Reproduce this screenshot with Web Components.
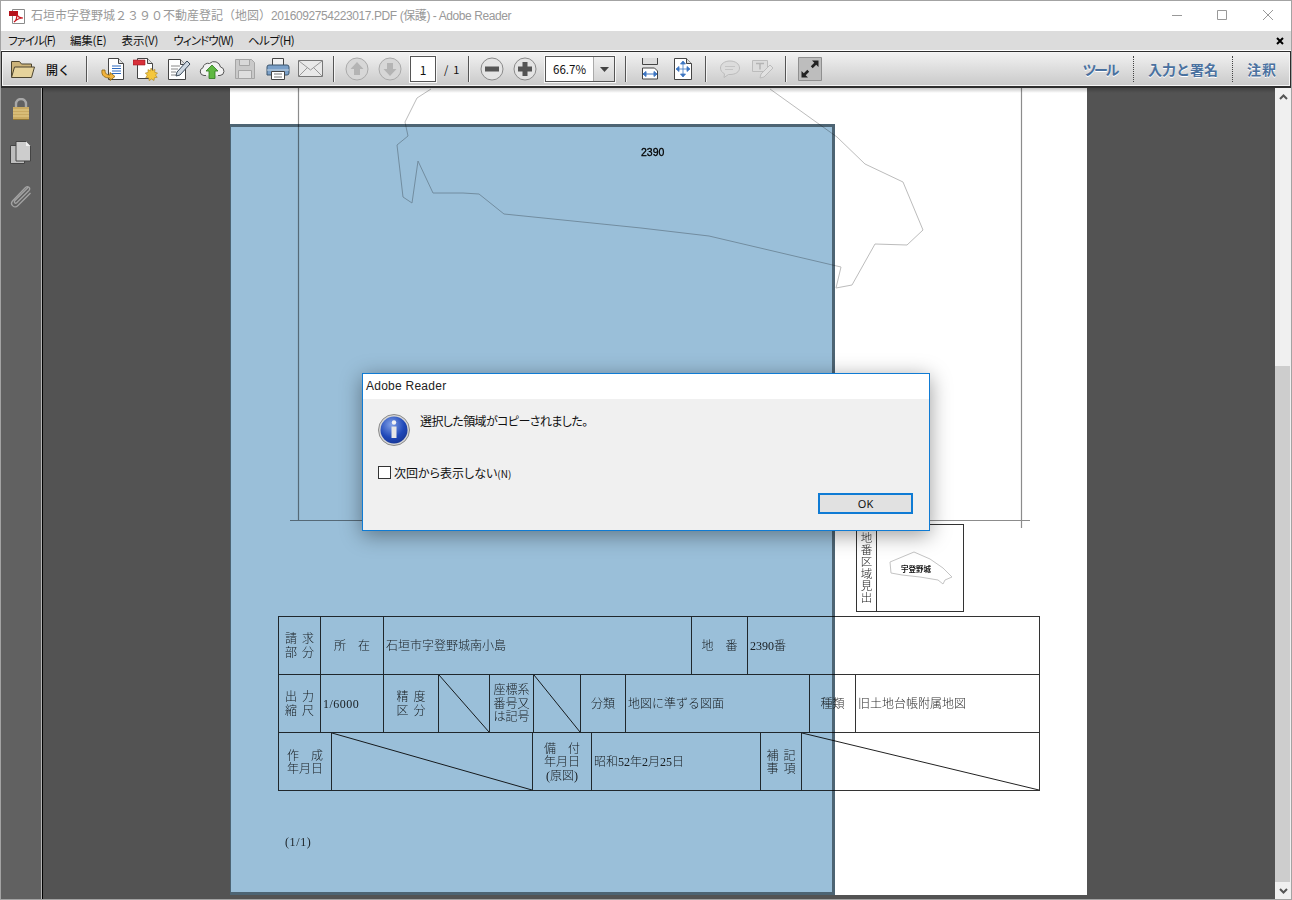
<!DOCTYPE html>
<html lang="ja">
<head>
<meta charset="utf-8">
<title>Adobe Reader</title>
<style>
  html, body { margin: 0; padding: 0; background: #535353; }
  body { font-family: "Noto Sans CJK JP", "Noto Sans", sans-serif; overflow: hidden; }
</style>
</head>
<body>
<reader-window>
  <title-bar>石垣市字登野城２３９０不動産登記（地図）<span style="letter-spacing:-.42px">2016092754223017.PDF (保護) - Adobe Reader</span></title-bar>
  <menu-bar></menu-bar>
  <tool-bar></tool-bar>
  <nav-pane></nav-pane>
  <doc-viewer></doc-viewer>
  <scroll-bar></scroll-bar>
  <message-dialog heading="Adobe Reader" message="選択した領域がコピーされました。"></message-dialog>
</reader-window>

<script>
const UI_FONT = `"Noto Sans CJK JP", "Noto Sans", sans-serif`;
const DOC_FONT = `"Liberation Serif", "Noto Sans CJK JP", serif`;

class ReaderWindow extends HTMLElement {
  constructor() {
    super();
    this.attachShadow({ mode: "open" });
  }
  connectedCallback() {
    this.shadowRoot.innerHTML = `
      <style>
        :host {
          display: flex;
          flex-direction: column;
          position: relative;
          width: 1292px;
          height: 900px;
          box-sizing: border-box;
          border: 1px solid #a3a3a3;
          background: #fff;
          overflow: hidden;
        }
        .main { display: flex; flex: 1; min-height: 0; }
      </style>
      <slot name="top"></slot>
      <div class="main"><slot name="main"></slot></div>
      <slot name="over"></slot>
    `;
    for (const el of this.children) {
      const tag = el.tagName.toLowerCase();
      if (tag === "nav-pane" || tag === "doc-viewer" || tag === "scroll-bar") el.slot = "main";
      else if (tag === "message-dialog") el.slot = "over";
      else el.slot = "top";
    }
  }
}

class TitleBar extends HTMLElement {
  constructor() {
    super();
    this.attachShadow({ mode: "open" });
  }
  connectedCallback() {
    this.shadowRoot.innerHTML = `
      <style>
        :host {
          display: flex;
          align-items: center;
          height: 30px;
          background: #fff;
          color: #999;
          font: 12px/30px "Liberation Sans", ${UI_FONT};
          white-space: nowrap;
        }
        .icon { margin: 0 5px 0 8px; flex: none; }
        .text { flex: 1; }
        .ctl { width: 46px; height: 30px; box-sizing: border-box; padding-bottom: 2px; display: flex; align-items: center; justify-content: center; flex: none; }
      </style>
      <svg class="icon" width="17" height="17" viewBox="0 0 17 17">
        <path d="M3.500 1.500h12v14h-12z" fill="#fff" stroke="#8a8a8a"/>
        <path d="M0 3h9v5H0z" fill="#b5121b"/>
        <path d="M5 14c2-1 3-5 3-9 0 4 3 5 6 5-3 0-6 1-9 4z" fill="none" stroke="#c8161f" stroke-width="1.200"/>
      </svg>
      <span class="text"><slot></slot></span>
      <span class="ctl" style="width:44px"><svg width="10" height="10"><path d="M0 5.500h10" stroke="#999"/></svg></span>
      <span class="ctl"><svg width="10" height="10"><path d="M.5.500h9v9h-9z" fill="none" stroke="#999"/></svg></span>
      <span class="ctl"><svg width="10" height="10"><path d="M0 0l10 10M10 0L0 10" stroke="#999"/></svg></span>
    `;
  }
}

class MenuBar extends HTMLElement {
  constructor() {
    super();
    this.attachShadow({ mode: "open" });
  }
  connectedCallback() {
    this.shadowRoot.innerHTML = `
      <style>
        :host {
          display: flex;
          align-items: center;
          height: 19px;
          margin-bottom: 1px;
          padding-left: 7px;
          background: #dcdcdc;
          color: #111;
          font: 11.500px/19px ${UI_FONT};
          font-feature-settings: "palt";
          white-space: nowrap;
        }
        span { margin-right: 15px; }
        svg { margin-left: auto; margin-right: 7px; }
      </style>
      <span style="letter-spacing:-1px">ファイル(F)</span><span style="letter-spacing:-.2px">編集(E)</span><span style="letter-spacing:-.1px">表示(V)</span><span style="letter-spacing:-.9px">ウィンドウ(W)</span><span style="letter-spacing:-.5px">ヘルプ(H)</span>
      <svg width="8" height="8"><path d="M1 1l6 6M7 1L1 7" stroke="#000" stroke-width="2"/></svg>
    `;
  }
}

const ICONS = {
  folder: `<svg width="26" height="22" viewBox="0 0 26 22"><path d="M1.500 19V3.500h8l2 2.500h10V9" fill="#cdb47a" stroke="#4d4530"/><path d="M1.500 19.500l3-10.500h20l-3 10.500z" fill="#e6d39c" stroke="#4d4530"/></svg>`,
  exportDoc: `<svg width="26" height="26" viewBox="0 0 26 26"><path d="M8.500 2.500h10l5 5v16h-15z" fill="#fff" stroke="#444"/><path d="M18.500 2.500v5h5" fill="#ddd" stroke="#444"/><path d="M12 10h9M12 12.500h9M12 15h9M12 17.500h9" stroke="#2f6bc0"/><path d="M2 14c-1 6 3 8 8 8v2.500l5-4-5-4V19c-3 0-5-1-5-5z" fill="#f2b33d" stroke="#8c6410" stroke-width=".8"/></svg>`,
  pageGear: `<svg width="26" height="26" viewBox="0 0 26 26"><path d="M4.500 2.500h10l5 5v15h-15z" fill="#fff" stroke="#444"/><path d="M14.500 2.500v5h5" fill="#ddd" stroke="#444"/><path d="M0 4h12v5H0z" fill="#d8303a" stroke="#9c1a22" stroke-width=".6"/><path d="M18 12l1.500 2.500 2.500-1-.3 2.800 2.800.7-2 2 1.700 2.300-2.800.4-.4 2.800-2.500-1.500-2.300 1.700-.6-2.800-2.800-.3 1.500-2.500-2-2 2.800-.7-.1-2.800 2.500 1.200z" fill="#f5c73c" stroke="#a9801a" stroke-width=".6"/></svg>`,
  pagePen: `<svg width="24" height="24" viewBox="0 0 24 24"><path d="M1.500 2.500h12l5 5v15h-17z" fill="#fff" stroke="#444"/><path d="M13.500 2.500v5h5" fill="#ddd" stroke="#444"/><path d="M4 9h9M4 12h7M4 15h5M4 18h5" stroke="#888"/><path d="M9 19l1-4L20 4l3 3-10 11z" fill="#cfd8e2" stroke="#3a4a5a"/></svg>`,
  cloud: `<svg width="26" height="24" viewBox="0 0 26 24"><path d="M7 18.500H5a4 4 0 0 1-1-7.800 5 5 0 0 1 6.500-4.200 6.500 6.500 0 0 1 11 3.500 4.300 4.300 0 0 1-.5 8.500h-2" fill="#f2f2f2" stroke="#555"/><path d="M13 8l6 6h-3v7.500h-6V14H7z" fill="#5fb842" stroke="#2f7a1f" stroke-width=".8"/></svg>`,
  save: `<svg width="22" height="22" viewBox="0 0 22 22"><path d="M1.500 1.500h16l3 3v16h-19z" fill="#c9c9c9" stroke="#a5a5a5"/><path d="M5.500 1.500h10v6h-10z" fill="#d8d8d8" stroke="#a5a5a5"/><path d="M4.500 12.500h13v8h-13z" fill="#dedede" stroke="#a5a5a5"/></svg>`,
  print: `<svg width="24" height="24" viewBox="0 0 24 24"><path d="M6.500 1.500h11v7h-11z" fill="#f2f2f2" stroke="#444"/><path d="M3 8h18q2 0 2 2v6q0 2-2 2H1v-8q0-2 2-2z" fill="#7ba0c8" stroke="#3d566f"/><path d="M1 13h22" stroke="#c7d5e2"/><path d="M5.500 14.500h13v8h-13z" fill="#fff" stroke="#444"/><path d="M8 17h8M8 20h8" stroke="#777"/></svg>`,
  mail: `<svg width="25" height="18" viewBox="0 0 25 18"><path d="M.5.500h24v16h-24z" fill="#e9e9e9" stroke="#777"/><path d="M1 1l11.500 9L24 1M1 16l8.500-8.500M24 16l-8.500-8.500" fill="none" stroke="#999"/></svg>`,
  up: `<svg width="24" height="24" viewBox="0 0 24 24"><circle cx="12" cy="12" r="11" fill="#d7d7d7" stroke="#aaa"/><path d="M12 5l6.500 7H15v6H9v-6H5.500z" fill="#b4b4b4"/></svg>`,
  down: `<svg width="24" height="24" viewBox="0 0 24 24"><circle cx="12" cy="12" r="11" fill="#d7d7d7" stroke="#aaa"/><path d="M12 19l6.500-7H15V6H9v6H5.500z" fill="#b4b4b4"/></svg>`,
  minus: `<svg width="24" height="24" viewBox="0 0 24 24"><circle cx="12" cy="12" r="11" fill="#e4e4e4" stroke="#8a8a8a"/><path d="M5 9.500h14v5H5z" fill="#555"/></svg>`,
  plus: `<svg width="24" height="24" viewBox="0 0 24 24"><circle cx="12" cy="12" r="11" fill="#e4e4e4" stroke="#8a8a8a"/><path d="M9.500 5h5v4.500H19v5h-4.500V19h-5v-4.500H5v-5h4.500z" fill="#555"/></svg>`,
  fitWidth: `<svg width="18" height="22" viewBox="0 0 18 22"><path d="M1.500 0v6.500h15V0" fill="#dcdcdc" stroke="#444"/><path d="M1.500 21v-11h12l3 3v8z" fill="#fff" stroke="#444"/><path d="M2 16h14M2 16l3-2.500V18.500zM16 16l-3-2.500v5z" fill="#3e76c2" stroke="#3e76c2"/></svg>`,
  fitPage: `<svg width="18" height="22" viewBox="0 0 18 22"><path d="M.5.500h12l5 5v16H.5z" fill="#fff" stroke="#444"/><path d="M12.500.500v5h5" fill="#ddd" stroke="#444"/><path d="M9 4v14M3 11h12M9 3l-2.500 3h5zM9 19l-2.500-3h5zM2 11l3-2.500v5zM16 11l-3-2.500v5z" fill="#3e76c2" stroke="#3e76c2" stroke-width=".8"/></svg>`,
  comment: `<svg width="22" height="20" viewBox="0 0 22 20"><path d="M11 2C5.500 2 1.500 5 1.500 9c0 2.500 1.500 4.500 4 5.800L5 18.500l4.500-3H11c5.500 0 9.500-2.500 9.500-6.500S16.500 2 11 2z" fill="#dcdcdc" stroke="#bcbcbc"/><path d="M6 7.500h10M6 10.500h8" stroke="#c4c4c4"/></svg>`,
  textPen: `<svg width="22" height="22" viewBox="0 0 22 22"><path d="M.5 2.500h15v11H.5z" fill="#dcdcdc" stroke="#bcbcbc"/><path d="M4 5.500h8M8 5.500v6" stroke="#b4b4b4" stroke-width="1.500"/><path d="M8 20l1-4 9-9 3 3-9 9z" fill="#e2e2e2" stroke="#bcbcbc"/></svg>`,
  expand: `<svg width="24" height="24" viewBox="0 0 24 24"><path d="M.5.500h23v23H.5z" fill="#bdbdbd" stroke="#8f8f8f"/><path d="M14 3.500h6.500V10l-2.300-2.300-3.500 3.500-1.900-1.900 3.500-3.500z" fill="#222"/><path d="M3.500 20.500V14l2.300 2.300 3.500-3.500 1.900 1.900-3.500 3.500 2.300 2.300z" fill="#222"/></svg>`,
  caret: `<svg width="9" height="5"><path d="M0 0h9L4.500 5z" fill="#444"/></svg>`
};

class ToolBar extends HTMLElement {
  constructor() {
    super();
    this.attachShadow({ mode: "open" });
  }
  connectedCallback() {
    const btn = (name, ml) => `<span class="btn" style="margin-left:${ml || 0}px">${ICONS[name]}</span>`;
    const sep = (ml) => `<span class="sep" style="margin-left:${ml}px"></span>`;
    this.shadowRoot.innerHTML = `
      <style>
        :host {
          display: flex;
          align-items: center;
          height: 37px;
          box-sizing: border-box;
          border: 1px solid #2d2d2d;
          border-width: 1px 1px 2px 1px;
          box-shadow: inset 0 0 0 1px #f4f4f4;
          background: linear-gradient(#f2f2f2, #c9c9c9);
          color: #111;
          font: 12px ${UI_FONT};
          white-space: nowrap;
        }
        .btn { display: flex; align-items: center; justify-content: center; width: 33px; height: 32px; flex: none; }
        .folder { width: 34px; margin-left: 4px; }
        .open { width: 22px; margin-left: 6px; font-size: 12px; font-weight: 500; }
        .sep { width: 2px; height: 26px; flex: none; background: linear-gradient(90deg, #555 50%, #f4f4f4 50%); }
        .box {
          display: flex;
          align-items: center;
          justify-content: center;
          box-sizing: border-box;
          height: 26px;
          border: 1px solid #555;
          box-shadow: 0 0 0 1px #f8f8f8;
          background: #fff;
          flex: none;
        }
        .page { width: 26px; margin-left: 4px; }
        .count { width: 16px; margin-left: 8px; font-size: 11px; }
        .zoom { width: 70px; margin-left: 4px; justify-content: flex-start; }
        .zoom b { font-weight: 400; width: 47px; text-align: center; font-size: 11.500px; }
        .zoom i { display: flex; align-items: center; justify-content: center; align-self: stretch; flex: 1; border-left: 1px solid #aaa; background: linear-gradient(#f0f0f0, #d4d4d4); }
        .right { margin-left: auto; margin-right: 13px; display: flex; align-items: center; color: #4a719f; font-size: 14px; font-weight: 700; text-shadow: 0 1px 0 #fff; }
        .right span + span { margin-left: 14px; padding-left: 14px; border-left: 1px dotted #444; line-height: 26px; }
        .right span:nth-child(2) { margin-left: 16px; }
      </style>
      <span class="btn folder">${ICONS.folder}</span>
      <span class="open">開く</span>
      ${sep(18)}
      ${btn("exportDoc", 8)}${btn("pageGear")}${btn("pagePen")}${btn("cloud")}${btn("save")}${btn("print")}${btn("mail")}
      ${sep(6)}
      ${btn("up", 5)}${btn("down")}
      <span class="box page">1</span>
      <span class="count">/&nbsp;&nbsp;1</span>
      ${sep(8)}
      ${btn("minus", 5)}${btn("plus")}
      <span class="box zoom"><b>66.7%</b><i>${ICONS.caret}</i></span>
      ${sep(10)}
      ${btn("fitWidth", 6)}${btn("fitPage")}
      ${sep(6)}
      ${btn("comment", 6)}${btn("textPen")}
      ${sep(6)}
      ${btn("expand", 6)}
      <div class="right"><span style="letter-spacing:-2.500px">ツール</span><span>入力と署名</span><span style="letter-spacing:1px">注釈</span></div>
    `;
  }
}

class NavPane extends HTMLElement {
  constructor() {
    super();
    this.attachShadow({ mode: "open" });
  }
  connectedCallback() {
    this.shadowRoot.innerHTML = `
      <style>
        :host {
          display: flex;
          flex-direction: column;
          align-items: center;
          flex: none;
          width: 42px;
          box-sizing: border-box;
          padding: 10px 2px 0 0;
          gap: 20px;
          background: #616161;
          border-right: 1px solid #000;
          box-shadow: inset -1px 0 0 #b5b5b5;
        }
        svg { display: block; }
      </style>
      <svg width="18" height="23" viewBox="0 0 18 23"><path d="M4 10V6a5 5 0 0 1 10 0v4" fill="none" stroke="#a8a8a8" stroke-width="2.400"/><path d="M1 9h16v13H1z" fill="#c9aa62"/><path d="M1 12h16M1 15h16M1 18h16" stroke="#e6cf8c"/><path d="M1 21.500h16" stroke="#8f7636"/></svg>
      <svg width="21" height="23" viewBox="0 0 21 23"><path d="M.5 4.500h14v18H.5z" fill="#bdbdbd" stroke="#444"/><path d="M6 .500h10l4.500 4.500v15H6z" fill="#cdcdcd" stroke="#444"/><path d="M16 .500v4.500h4.500z" fill="#f0f0f0"/></svg>
      <svg width="22" height="24" viewBox="0 0 22 24"><path d="M18 3.500L5 16.500c-1.500 1.500 0 3.500 1.500 2.500L19 6.500c2-2.500-1-5-3.500-3L2.500 17c-3 3.500 2 8 5.500 4.500L20.500 9" fill="none" stroke="#a3a3a3" stroke-width="1.300"/></svg>
    `;
  }
}

class DocViewer extends HTMLElement {
  constructor() {
    super();
    this.attachShadow({ mode: "open" });
  }
  connectedCallback() {
    this.shadowRoot.innerHTML = `
      <style>
        :host {
          display: flex;
          justify-content: center;
          align-items: flex-start;
          position: relative;
          flex: 1;
          min-width: 0;
          background: #535353;
          overflow: hidden;
        }
        pdf-page { margin-right: 1px; }
        .shade { position: absolute; left: 0; right: 0; top: 0; height: 5px; background: linear-gradient(rgba(0,0,0,.22), rgba(0,0,0,0)); z-index: 2; }
      </style>
      <div class="shade"></div>
      <pdf-page></pdf-page>
    `;
  }
}

class PdfPage extends HTMLElement {
  constructor() {
    super();
    this.attachShadow({ mode: "open" });
  }
  connectedCallback() {
    this.shadowRoot.innerHTML = `
      <style>
        :host {
          display: block;
          position: relative;
          isolation: isolate;
          flex: none;
          width: 857px;
          height: 807px;
          background: #fff;
          color: #222;
          font-family: ${DOC_FONT};
          font-weight: 300;
        }
        svg.map { position: absolute; left: 0; top: 0; }
        .parcel { position: absolute; left: 411px; top: 58px; font: 10.500px "Liberation Sans", sans-serif; color: #000; -webkit-text-stroke: .3px #000; }
        .sheet { position: absolute; left: 55px; top: 747px; font-size: 12px; letter-spacing: .6px; color: #333; }
        .legend {
          position: absolute;
          left: 626px;
          top: 436px;
          width: 108px;
          height: 88px;
          box-sizing: border-box;
          display: flex;
          border: 1px solid #333;
        }
        .legend .head {
          width: 20px;
          box-sizing: border-box;
          border-right: 1px solid #333;
          display: flex;
          align-items: flex-end;
          justify-content: center;
          padding-bottom: 7px;
          font-size: 11.500px;
          line-height: 12px;
          text-align: center;
        }
        .legend .town { position: absolute; left: 44px; top: 38px; font: 700 7.500px "Noto Sans CJK JP", sans-serif; white-space: nowrap; color: #111; }
        parcel-table { position: absolute; left: 48px; top: 528px; }
        .selection {
          position: absolute;
          left: 0;
          top: 36px;
          width: 605px;
          height: 771px;
          box-sizing: border-box;
          border: solid #4d6473;
          border-width: 3px 3px 3px 1px;
          background: #9abfd9;
          mix-blend-mode: multiply;
        }
      </style>
      <svg class="map" width="857" height="807" viewBox="230 88 857 807">
        <path d="M298.500 88v432M1021.500 88v440M290 520.500h740" fill="none" stroke="#8c8c8c" stroke-width="1.200"/>
        <path d="M431 89l-14 9-12 24 3 14-11 9 6 52 9 6 6-42 15 32h30l16 1 25 20 137 14 68 8 132 31-5 21 16-3 23-41 32 1 16-15-20-48-38-18-28-27-67-48" fill="none" stroke="#bcbcbc"/>
        <path d="M890 562l12-5 12-5 16 7 13 9 9 9-7 3-2 4-5-4-18-3-18-2-11-2z" fill="none" stroke="#c4c4c4"/>
      </svg>
      <span class="parcel">2390</span>
      <span class="sheet">(1/1)</span>
      <div class="legend">
        <div class="head">地<br>番<br>区<br>域<br>見<br>出</div>
        <span class="town">宇登野城</span>
      </div>
      <parcel-table></parcel-table>
      <div class="selection"></div>
    `;
  }
}

class ParcelTable extends HTMLElement {
  constructor() {
    super();
    this.attachShadow({ mode: "open" });
  }
  connectedCallback() {
    const cell = (w, html, cls) => `<div class="cell ${cls || ""}" style="width:${w}px">${html || ""}</div>`;
    const diag = `<svg class="diag" preserveAspectRatio="none" viewBox="0 0 100 100"><path d="M0 0L100 100" stroke="#222" vector-effect="non-scaling-stroke" fill="none"/></svg>`;
    this.shadowRoot.innerHTML = `
      <style>
        :host {
          display: block;
          width: 762px;
          box-sizing: border-box;
          border: 1px solid #333;
          border-bottom: 0;
          font-size: 12px;
          color: #2a2a2a;
        }
        .row { display: flex; height: 57px; border-bottom: 1px solid #333; }
        .row:first-child { height: 58px; }
        .cell {
          position: relative;
          display: flex;
          align-items: center;
          justify-content: center;
          text-align: center;
          box-sizing: border-box;
          flex: none;
          padding-top: 2px;
          border-right: 1px solid #333;
          line-height: 13.500px;
          white-space: pre;
          word-spacing: 2px;
        }
        .row:last-child .cell { padding-top: 3px; }
        .cell:last-child { border-right: 0; flex: 1; }
        .l { justify-content: flex-start; text-align: left; padding-left: 2px; }
        .wide { letter-spacing: .5px; }
        .diag { position: absolute; left: 0; top: 0; width: 100%; height: 100%; }
      </style>
      <div class="row">
        ${cell(42, "請 求\n部 分")}
        ${cell(63, "所　在")}
        ${cell(308, "石垣市字登野城南小島", "l")}
        ${cell(56, "地　番")}
        ${cell(0, "2390番", "l")}
      </div>
      <div class="row">
        ${cell(42, "出 力\n縮 尺")}
        ${cell(63, "1/6000", "l wide")}
        ${cell(55, "精 度\n区 分")}
        ${cell(51, diag)}
        ${cell(44, "座標系\n番号又\nは記号")}
        ${cell(47, diag)}
        ${cell(45, "分類")}
        ${cell(184, "地図に準ずる図面", "l")}
        ${cell(46, "種類")}
        ${cell(0, "旧土地台帳附属地図", "l")}
      </div>
      <div class="row">
        ${cell(53, "作　成\n年月日")}
        ${cell(201, diag)}
        ${cell(59, "備　付\n年月日\n(原図)")}
        ${cell(169, "昭和52年2月25日", "l")}
        ${cell(41, "補 記\n事 項")}
        ${cell(0, diag)}
      </div>
    `;
  }
}

class ScrollBar extends HTMLElement {
  constructor() {
    super();
    this.attachShadow({ mode: "open" });
  }
  connectedCallback() {
    this.shadowRoot.innerHTML = `
      <style>
        :host {
          display: flex;
          flex-direction: column;
          flex: none;
          width: 16px;
          background: #f0f0f0;
        }
        .arrow { height: 17px; display: flex; align-items: center; justify-content: center; flex: none; }
        .gap { height: 261px; flex: none; }
        .thumb { flex: 1; background: #cdcdcd; margin-right: 1px; }
      </style>
      <div class="arrow"><svg width="9" height="6"><path d="M1 5l3.500-3.500L8 5" fill="none" stroke="#555" stroke-width="2"/></svg></div>
      <div class="gap"></div>
      <div class="thumb"></div>
      <div class="arrow"><svg width="9" height="6"><path d="M1 1l3.500 3.500L8 1" fill="none" stroke="#555" stroke-width="2"/></svg></div>
    `;
  }
}

class MessageDialog extends HTMLElement {
  constructor() {
    super();
    this.attachShadow({ mode: "open" });
  }
  connectedCallback() {
    this.shadowRoot.innerHTML = `
      <style>
        :host {
          display: flex;
          flex-direction: column;
          position: absolute;
          left: 361px;
          top: 372px;
          width: 568px;
          height: 158px;
          box-sizing: border-box;
          border: 1px solid #0f7bd4;
          background: #f0f0f0;
          box-shadow: 0 4px 20px rgba(0,0,0,.4);
          color: #111;
          font: 12px ${UI_FONT};
          font-feature-settings: "palt";
        }
        .head { height: 24px; margin-bottom: 1px; flex: none; background: #fff; box-shadow: 0 1px 0 #fff; padding-left: 3px; line-height: 24px; color: #222; font-family: "Liberation Sans", sans-serif; letter-spacing: .25px; }
        .body { flex: 1; display: flex; flex-direction: column; padding: 15px 16px 16px 15px; }
        .msg { display: flex; align-items: flex-start; gap: 10px; height: 50px; }
        .msg span { line-height: 14px; letter-spacing: -.6px; }
        .check { display: flex; align-items: center; gap: 3px; }
        .box { width: 11px; height: 11px; border: 1px solid #333; background: #fff; flex: none; }
        small { font-size: 10px; }
        .ok {
          align-self: flex-end;
          margin-top: auto;
          width: 95px;
          height: 21px;
          box-sizing: border-box;
          border: 2px solid #0f7bd4;
          background: #e1e1e1;
          text-align: center;
          font-size: 11px;
          line-height: 17px;
          font-family: "Noto Sans", sans-serif;
        }
      </style>
      <div class="head">${this.getAttribute("heading")}</div>
      <div class="body">
        <div class="msg">
          <svg width="32" height="32" viewBox="0 0 32 32">
            <defs><radialGradient id="g" cx=".4" cy=".3" r=".8"><stop offset="0" stop-color="#7f9fe6"/><stop offset=".6" stop-color="#1f48b8"/><stop offset="1" stop-color="#17338e"/></radialGradient></defs>
            <circle cx="16" cy="16" r="15.500" fill="#d6d6d6" stroke="#8b8b8b"/>
            <circle cx="16" cy="16" r="13.500" fill="url(#g)"/>
            <circle cx="16" cy="8.500" r="2.200" fill="#f4f4f4"/>
            <path d="M13.500 12.500h5V24h-5z" fill="#e6e6e6"/>
          </svg>
          <span>${this.getAttribute("message")}</span>
        </div>
        <div class="check"><span class="box"></span><span>次回から表示しない<small>(N)</small></span></div>
        <div class="ok">OK</div>
      </div>
    `;
  }
}

customElements.define("title-bar", TitleBar);
customElements.define("menu-bar", MenuBar);
customElements.define("tool-bar", ToolBar);
customElements.define("nav-pane", NavPane);
customElements.define("parcel-table", ParcelTable);
customElements.define("pdf-page", PdfPage);
customElements.define("doc-viewer", DocViewer);
customElements.define("scroll-bar", ScrollBar);
customElements.define("message-dialog", MessageDialog);
customElements.define("reader-window", ReaderWindow);
</script>
</body>
</html>
